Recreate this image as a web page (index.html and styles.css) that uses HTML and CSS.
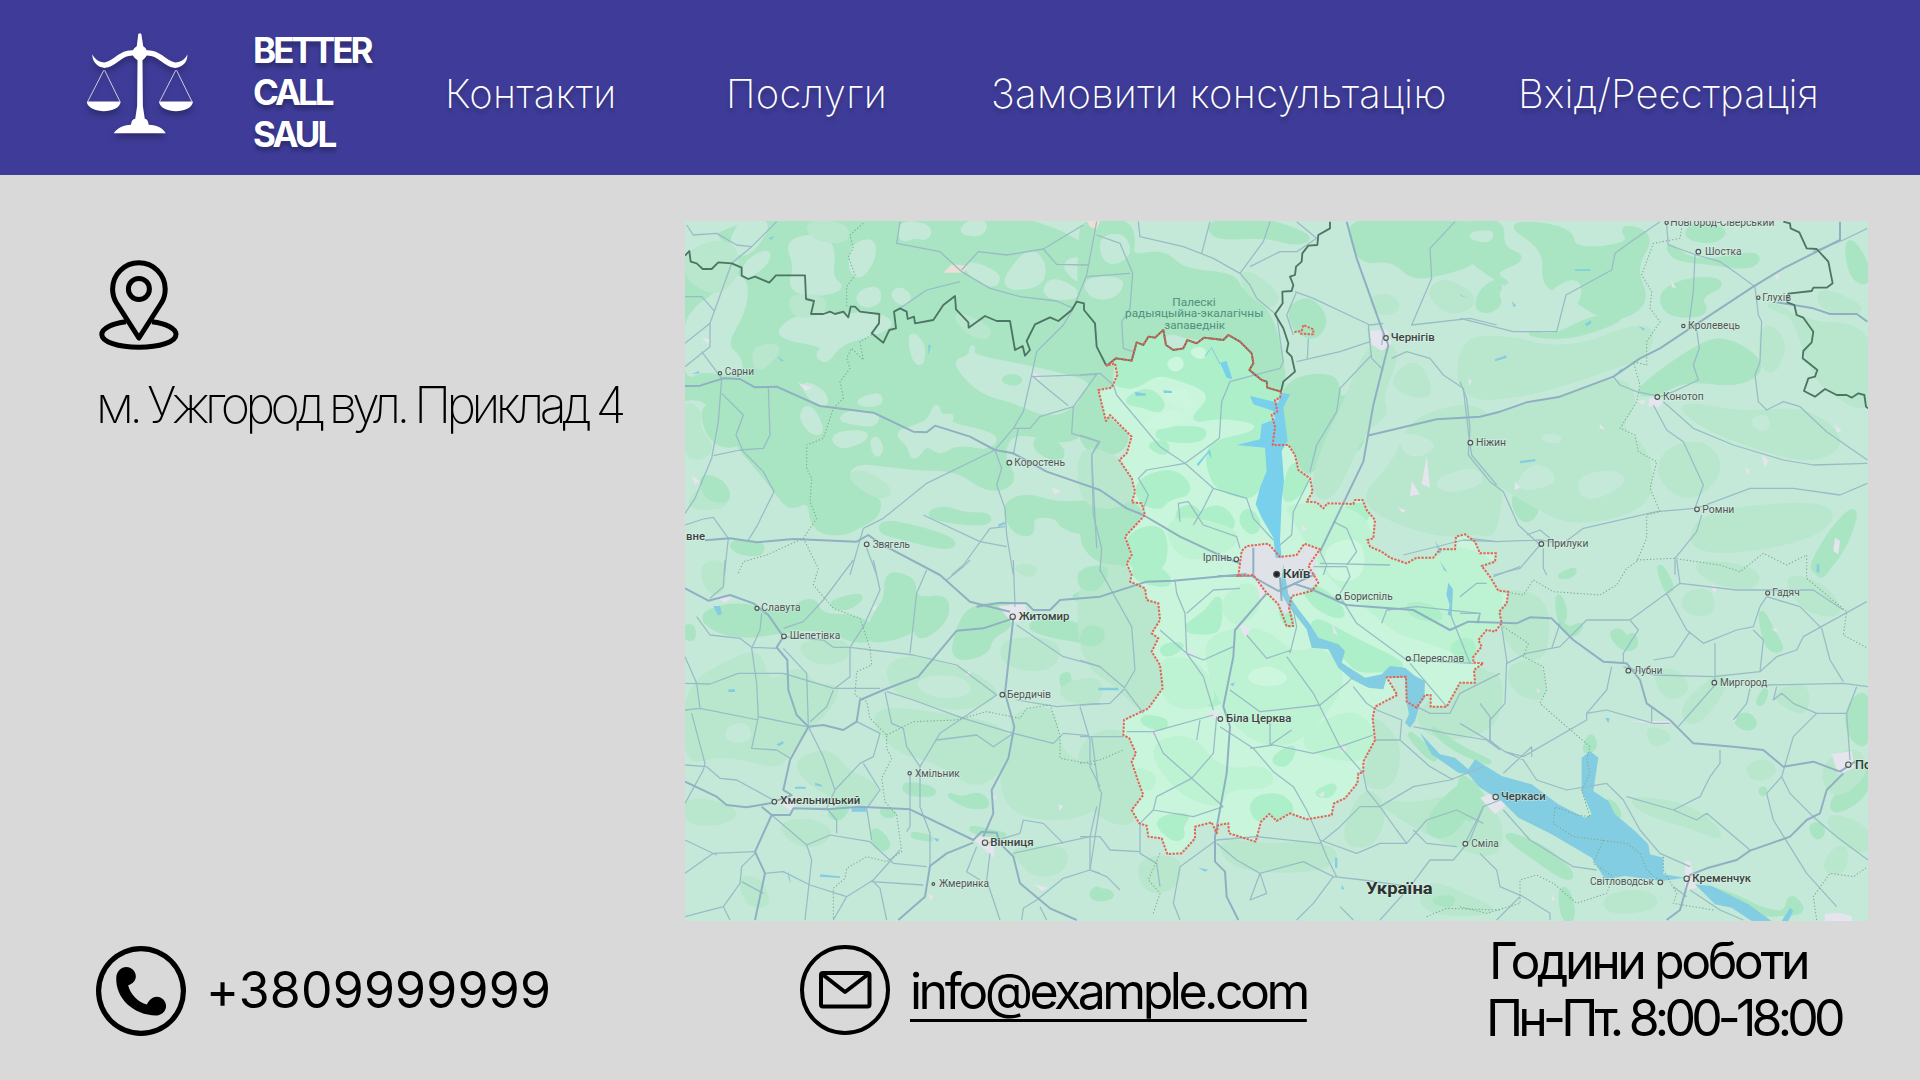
FILE: index.html
```html
<!DOCTYPE html>
<html lang="uk">
<head>
<meta charset="utf-8">
<title>Better Call Saul — Контакти</title>
<link rel="stylesheet" href="styles.css">
</head>
<body>
<header class="header">
  <svg class="logo" viewBox="72 100 277 304" preserveAspectRatio="none" aria-hidden="true">
    <path fill="#fff" d="M206 103Q210 99 214 103L219 140Q226 145 228 152C262 150 275 180 302 189C318 188 330 178 334 164C336 182 325 203 302 205C275 204 260 168 228 168Q224 177 217 182L218 320L223 358Q232 360 233 376C255 376 272 388 278 402H142C150 387 166 377 187 376Q188 360 198 358L203 320L204 182Q196 177 192 168C160 168 147 204 118 205C96 203 85 182 86 164C92 178 102 188 118 189C146 180 158 150 192 152Q195 145 202 140Z"/>
    <path fill="#fff" d="M71 306H160C157 345 75 345 71 306ZM260 306H349C345 345 264 345 260 306Z"/>
    <path fill="none" stroke="#fff" stroke-opacity=".8" stroke-width="2.6" d="M116 212L74 306M118 212L158 306M304 212L262 306M306 212L346 306"/>
  </svg>
  <div class="brand">BETTER<br>CALL<br>SAUL</div>
  <a class="nav-link">Контакти</a>
  <a class="nav-link">Послуги</a>
  <a class="nav-link">Замовити консультацію</a>
  <a class="nav-link login">Вхід/Реєстрація</a>
</header>
<main class="main">
  <section class="address">
    <svg class="pin" width="80" height="90" viewBox="0 0 80 90" fill="none" stroke="#000" stroke-width="5" stroke-linejoin="round" aria-hidden="true">
      <path d="M39.9 78L17.5 43C15 39 13.6 34 13.6 29A26.3 26.3 0 0 1 66.2 29C66.2 34 65 39 62.3 43Z"/>
      <circle cx="39.9" cy="29" r="10.5"/>
      <path d="M53 61.8C67 63.5 77 68.5 77 74.5C77 82 60.5 87.3 39.9 87.3S2.8 82 2.8 74.5C2.8 68.5 13 63.5 27 61.8"/>
    </svg>
    <p class="address-text">м. Ужгород вул. Приклад 4</p>
  </section>
  <svg class="map" viewBox="0 0 3549 2100" preserveAspectRatio="none">
    <defs>
      <clipPath id="oblast-clip"><use href="#oblast"/></clipPath>
      <path id="oblast" transform="translate(1185 -18)" d="M80 452L108 430 155 437 170 382 190 390 205 365 225 368 250 345 258 390 280 405 310 400 322 375 350 385 372 368 430 375 445 360 480 380 515 415 520 445 508 465 545 495 560 500 562 518 603 530 600 548 585 555 592 590 575 600 585 635 578 690 625 690 645 720 655 765 690 790 698 830 680 860 710 862 730 880 742 865 820 867 825 855 848 855 860 885 885 915 880 970 862 975 870 995 905 1010 930 1028 980 1045 1010 1028 1060 1028 1080 1003 1125 1003 1128 965 1155 958 1185 980 1200 1015 1248 1015 1245 1040 1205 1053 1230 1085 1255 1127 1285 1130 1280 1165 1258 1190 1265 1225 1245 1250 1220 1245 1195 1275 1205 1295 1180 1325 1180 1343 1210 1345 1182 1365 1185 1403 1140 1403 1100 1475 1052 1475 1052 1440 1035 1440 1010 1478 980 1460 978 1385 920 1387 952 1440 885 1475 878 1510 885 1575 850 1640 850 1672 835 1675 832 1705 795 1750 762 1765 755 1800 680 1813 630 1795 590 1818 568 1797 543 1820 527 1880 447 1855 445 1825 415 1830 410 1855 395 1822 345 1835 345 1870 305 1915 262 1917 245 1870 205 1865 200 1832 178 1825 155 1785 190 1740 175 1700 155 1640 168 1615 148 1570 130 1560 132 1515 205 1480 248 1420 240 1350 215 1310 235 1270 215 1255 240 1215 235 1165 200 1155 195 1120 150 1100 155 1080 140 1045 155 1020 135 965 195 900 185 865 155 862 165 830 155 790 118 735 140 715 155 665 90 600 78 618 55 525 95 518 112 480 105 445Z"/>
    </defs>
    <g class="map-art">
    <rect width="3549" height="2100" fill="#c5e9d8"/>

    <!-- north-west: dense forest with clearings -->
    <g transform="translate(-15 -18)">
      <path class="forest" d="M-30 -20H1300V560L1230 600 1180 690 1000 640 960 720 1010 800 930 830 830 760 720 760 640 750 520 735 490 800 600 850 590 900 560 920 480 960 400 940 390 850 330 880 290 830 220 740 180 700 130 600 60 540 -30 560Z"/>
      <path class="light" d="M25 18H120L100 60 130 90 70 110 15 100V40ZM180 18H270L230 90 190 120 150 100ZM200 140L270 105 255 150 190 190ZM320 80L420 60 460 100 450 190 490 220 400 240 330 220 350 150ZM520 90L580 75 580 130 540 190 510 160ZM660 60L665 30 700 25 750 40 740 70 700 60 675 75ZM840 50L870 20 920 25 900 60ZM860 140L960 180 940 215 870 180ZM975 190L1050 100 1095 150 1080 210 990 220ZM1090 230L1120 190 1210 240 1130 250ZM1150 140L1230 130 1250 210 1180 190ZM530 240L590 215 600 260 550 275ZM635 240L660 220 690 245 670 270ZM100 250L150 180 200 200 190 290 130 390 180 430 180 480 60 460 20 490 15 330 60 270ZM310 330L400 290 500 310 560 290 640 320 600 350 480 380 440 440 410 420 440 390 300 365ZM690 350L730 390 725 450 700 430ZM820 440L870 430 880 390 870 425 1000 450 1140 480 1240 510 1170 580 1100 600 1000 555 900 530ZM365 500L430 530 440 570 400 560ZM520 565L600 535 600 570ZM360 600L390 570 430 650 395 655ZM480 610L520 590 595 600 580 630 510 620ZM455 660L550 650 560 670 480 700ZM575 680L590 670 605 700 590 725ZM750 620L770 565 780 610 820 600 800 630 950 660 930 700 830 680 780 715 740 680 700 735 690 690 650 655 700 640Z"/>
      <path class="mid" d="M20 110L150 70 180 170 110 240 20 190ZM330 240L440 250 420 300 340 300ZM820 290L930 340 920 370 860 350ZM220 400L290 390 290 420 230 470ZM15 560L60 590 50 640 100 700 60 730 15 720ZM500 780L560 770 640 830 590 850ZM20 860L110 790 150 870 60 880ZM380 20L500 30 500 80 400 70Z"/>
      <path class="forest" d="M60 580L130 560 190 600 190 690 100 690ZM60 780L130 800 150 860 80 850ZM750 890L800 880 850 900 930 900 920 930 760 910ZM610 920L720 940 830 980 800 1000 680 970 600 950ZM970 870L1040 840 1130 870 1260 860V960L1150 940 1130 900 1050 900 1060 960 1000 950ZM150 980L250 985 240 1020 170 1010ZM1080 660L1150 700 1140 740 1060 700ZM965 493L1000 482 1025 495 1000 508Z"/>
    </g>
    <!-- north: Polesia reserve and the Chernihiv side -->
    <g transform="translate(1185 -18)">
      <path class="forest" d="M20 18H140L160 70 150 130 250 110 310 170 460 180 480 230 560 280 600 400 615 540 545 495 508 440 440 360 330 370 260 340 150 430 80 450 0 380V60ZM390 18H530L600 30 700 70 640 85 560 60 400 70ZM810 10H1180L1150 100 1190 140 1100 170 1000 190 940 130 850 140 820 90ZM640 270L690 250 740 310 710 370 650 350 630 300ZM650 490L760 480 780 540 770 600 720 700 690 790 640 710 610 640 605 540ZM790 640L840 620 850 680 810 720ZM1200 230L1260 190V280L1190 290ZM760 540L880 560 860 600 780 620ZM0 530L60 520 80 620 150 660 110 720 0 700ZM20 860L150 860 190 900 130 960 150 1070 0 1010Z"/>
      <path class="mid" d="M870 380L960 400 900 540 920 600 850 640 760 850 700 840 720 720 800 560ZM1000 600L1260 560V960L1180 950 1070 960 900 900 850 840 950 740ZM870 250L930 240 960 280 900 300ZM490 160L600 240 570 280 490 220ZM1040 230L1100 190 1200 260 1110 300ZM930 500L1010 430 1060 540 990 540ZM0 700L100 720 150 790 150 860 60 880 0 840Z"/>
      <path class="light" d="M10 195L130 190 110 240 40 250ZM60 70L130 60 150 120 80 150ZM1100 360L1150 350 1170 390 1110 400ZM950 650L1080 690 990 730ZM1060 800L1180 760 1210 800 1110 830Z"/>
    </g>
    <!-- north-east -->
    <g transform="translate(2325 -18)">
      <path class="forest" d="M0 18H130L120 100 200 130 90 170 160 220 50 150 0 100ZM130 20L330 40 340 110 520 90 480 30 580 60 520 160 560 250 510 300 430 310 330 240 250 210 260 100ZM620 80L700 150 900 110 880 160 740 140 640 130ZM600 230L700 190 800 200 720 250 740 300 620 300ZM550 510L720 390 800 370 920 450 840 510 680 490 600 530 540 540ZM690 30L800 40 770 80 680 70ZM0 470L90 480 160 520 60 500ZM190 350L280 370 390 310 500 300 420 340 300 370ZM170 830L230 820 230 900 190 920 160 870ZM1060 1040L1120 940 1190 870 1170 960 1110 1060 1060 1070ZM130 690L170 760 160 790 130 740ZM1160 60L1220 140 1222 210 1170 180Z"/>
      <path class="mid" d="M0 370L160 370 250 400 390 390 500 340 580 340 560 420 440 460 240 530 0 560ZM0 620L280 560 480 480 530 560 470 640 560 700 580 870 350 930 220 870 110 800 30 720ZM640 560L860 600 1040 580 1160 680 1060 740 900 700 740 640ZM900 260L1000 290 1040 420 1090 520 1240 600V400L1180 330 1060 330ZM620 700L740 680 790 770 690 860 590 790ZM730 890L1120 860 1100 950 860 1010 680 1000ZM910 320L980 380 940 480 900 440ZM1080 220L1220 280 1150 300 1080 270Z"/>
      <path class="light" d="M120 230L180 190 200 250 140 270ZM720 260L800 220 880 250 800 280ZM170 810L220 750 270 770 280 800 210 820ZM350 790L460 770 500 800 380 860ZM240 670L290 660 300 680ZM870 620L920 600 920 650ZM260 240L350 190 360 250 300 310ZM20 60L100 50 80 80ZM1130 20L1220 20V70Z"/>
    </g>
    <!-- south-west -->
    <g transform="translate(-15 1017)">
      <path class="forest" d="M60 160L180 130 300 170 400 110 420 170 530 170 600 220 540 250 430 200 310 210 200 230 100 210ZM620 60L640 40 700 60 700 100 720 120 800 110 800 180 720 240 700 190 690 220 560 250 580 170 620 120ZM440 130L560 100 500 150ZM870 140L1000 130 990 200 930 230 920 280 820 300 830 220ZM1040 190L1160 180 1260 230V250L1080 220ZM1160 110L1260 90V130ZM1140 350L1170 340 1160 400ZM800 370L870 380 850 410ZM670 670L760 685 760 705 680 700ZM800 700L840 720 900 700 930 740 860 740ZM580 800L630 850 610 870 580 850ZM440 760L510 730 480 780ZM600 750L650 760 620 770ZM15 200L40 200 40 240 15 230ZM700 820L770 840 700 830ZM860 800L1000 830 900 820ZM1230 1000L1260 980V1020Z"/>
      <path class="mid" d="M15 380L180 290 240 280 260 380 360 320 400 380 480 380 440 450 390 500 350 540 300 620 220 600 120 580 15 610ZM110 500L260 480 320 530 250 580 150 560ZM620 310L720 290 800 320 900 350 960 410 840 450 720 420 640 390ZM560 440L820 470 960 500 1000 560 950 640 880 680 770 600 640 570ZM1000 460L1120 440 1130 540 1160 600 1250 620 1260 740 1150 780 1000 760 960 660 1000 560ZM1140 380L1260 350V430L1160 420ZM350 600L450 570 500 640 600 680 560 740 440 700 370 650ZM300 790L400 780 460 820 400 860 330 840ZM1000 870L1160 860 1150 930 1070 950 1010 890ZM180 950L240 960 270 1040 200 1030ZM20 710L180 750 130 790 20 790ZM350 250L500 240 500 300 400 310ZM1000 20L1070 20 1050 50ZM60 20L130 0 130 90 90 100ZM960 240L1140 240 1120 330 980 320Z"/>
      <path class="light" d="M150 500L200 495 210 540 140 540ZM700 360L840 350 880 400 760 410Z"/>
    </g>
    <!-- south, under the Kyiv region -->
    <g transform="translate(1185 1017)">
      <path class="mid" d="M0 20L150 20 235 120 220 240 250 370 190 460 120 380 0 300ZM860 460L960 540 940 680 850 680 880 560ZM1020 440L1260 300V500L1100 540 1020 500ZM0 540L140 500 180 680 160 800 60 770 0 700ZM420 840L560 860 700 850 780 880 720 930 520 930 440 900ZM850 680L920 740 880 860 780 850ZM170 900L300 890 290 980 200 1000ZM1040 960L1180 1020 1260 1060H1020ZM880 720L1000 740 1150 700 1260 760V900L1080 840Z"/>
      <path class="forest" d="M0 30L90 20 50 90 0 80ZM20 200L70 210 60 250 0 250ZM1060 750L1160 660 1200 680 1150 780 1100 830 1040 820ZM1040 490L1130 560 1260 620 1120 570ZM30 1000L80 990 100 1010 50 1020ZM1050 1020L1120 1010 1110 1040ZM970 500L1080 600 1040 590Z"/>
    </g>
    <!-- south-east -->
    <g transform="translate(2325 1017)">
      <path class="forest" d="M590 0L640 80 620 100ZM290 90L320 160 300 190 330 210 370 190 340 230 300 200ZM450 220L480 210 500 240 520 220 530 260 490 270ZM900 140L940 220 970 270 930 270 910 220ZM1170 430L1224 390V560L1180 540 1160 490ZM820 480L860 460 890 490 860 510ZM1190 640L1224 600V700L1130 760 1110 730ZM140 820L250 860 340 940 320 960 220 890 150 840ZM0 640L40 680 80 720 30 790 0 740ZM1050 800L1080 790 1090 820 1070 835ZM440 720L470 740 480 780 440 750ZM300 980L330 1000 340 1080 310 1080ZM370 580L390 520 410 560ZM290 50L350 25 330 50ZM1060 0L1120 0 1080 60ZM890 430L920 380 910 430ZM700 970L830 1010 920 1060H1040L990 1000 980 1070 840 1050ZM900 690L915 685 910 705Z"/>
      <path class="mid" d="M110 90L260 110 260 280 200 300 130 230ZM660 450L740 370 800 340 780 410 700 500ZM680 100L750 90 760 160 690 160 670 130ZM500 710L700 740 800 840 700 800 560 760ZM1080 620L1190 560 1224 640 1120 720ZM940 400L1040 370 1040 460 980 440ZM1120 870L1160 860 1150 940 1090 930ZM580 340L650 330 690 390 620 420ZM970 40L1100 80 1150 170 1030 150ZM140 320L240 300 260 420 170 400ZM700 0L900 30 880 90 740 60ZM0 330L100 330 100 500 0 470ZM860 620L920 600 950 640 880 660ZM560 500L640 530 580 560ZM430 1010L560 990 600 1040 450 1060ZM1090 760L1224 800V880L1150 850Z"/>
    </g>

    <!-- Kyiv region -->
    <use href="#oblast" fill="#c8f5dc"/>
    <g clip-path="url(#oblast-clip)">
      <g transform="translate(1185 -18)">
        <path class="inner-forest" d="M90 445L250 320 450 340 540 430 620 530 560 640 590 680 560 760 520 850 440 830 400 800 380 720 410 680 520 660 540 620 420 600 330 620 390 560 380 520 300 490 230 470 160 520 90 500ZM130 560L200 520 250 560 240 590 190 570ZM240 640L380 640 360 680 230 670ZM200 690L260 680 260 720ZM640 730L690 800 630 860 610 840ZM170 800L280 760 340 830 260 850 240 880 180 860ZM350 900L420 870 470 930 410 960ZM140 960L240 930 260 1000 240 1070 150 1060ZM760 900L850 860 870 910 800 930ZM290 890L340 870 370 920 300 940ZM820 960L850 990 840 1040 800 1000ZM500 880L540 920 520 960 480 920Z"/>
        <path class="inner-mid" d="M620 870L840 880 880 1000 1260 1000 1260 1240 1180 1330 1060 1280 950 1250 850 1160 740 1080 640 900ZM250 900L470 940 460 1000 300 1040Z"/>
        <path class="inner-light" d="M265 440L300 430 305 455 280 465ZM330 410L370 400 370 430ZM250 540L300 520 340 560 320 580ZM180 640L240 600 300 590 290 630ZM730 1000L840 970 850 1080 760 1100Z"/>
      </g>
      <g transform="translate(1185 1017)">
        <path class="inner-forest" d="M300 210L380 160 420 100 420 190 400 220ZM160 20L240 20 280 80 170 60ZM700 170L820 240 990 320 900 330 830 330 800 290 700 230ZM240 260L320 250 260 290ZM660 60L760 110 800 180 700 140ZM980 130L1060 140 1090 180 1000 170ZM340 370L420 360 440 420 370 440ZM570 600L650 550 620 620ZM700 700L770 670 750 710ZM240 560L300 560 320 630 250 620ZM220 780L330 760 300 800 310 830 280 840ZM930 360L980 350 980 440ZM510 720L600 700 650 760 530 790ZM600 150L620 140 640 190 620 200ZM190 470L260 480 250 510 190 490ZM1100 260L1180 230 1180 320ZM400 240L440 220 450 260Z"/>
        <path class="inner-mid" d="M380 230L540 200 640 290 720 260 800 350 720 480 620 560 500 530 420 420 390 330ZM250 300L340 300 400 380 390 440 270 440 240 350ZM650 540L800 450 880 500 860 600 740 590ZM200 560L330 520 420 640 560 620 580 680 440 680 420 740 300 700ZM160 620L230 650 200 700ZM520 60L420 120 460 200 540 150Z"/>
        <path class="inner-light" d="M500 350L560 320 620 350 600 370 540 370Z"/>
      </g>
    </g>

    <!-- built-up areas -->
    <g fill="#e6e4ec">
      <path fill="#dfe3e8" d="M1660 1020L1685 975 1750 968 1785 1005 1840 1000 1860 968 1905 985 1890 1040 1900 1085 1860 1110 1815 1125 1820 1165 1800 1180 1765 1130 1705 1065 1660 1065Z"/>
      <path d="M2055 330L2105 325 2120 370 2090 390 2060 370ZM940 1155L1020 1150 1030 1195 980 1205ZM855 1845L930 1850 925 1910ZM2385 1730L2440 1710 2465 1750 2430 1780ZM3440 1600L3500 1590 3510 1640 3460 1660ZM3000 1920L3015 1920 3035 2000 3000 2010ZM265 1735L340 1730 320 1770ZM2225 705L2235 800 2210 790ZM2180 780L2205 820 2175 825ZM2895 530L2935 540 2920 560 2890 555ZM1710 1075L1745 1110 1730 1145ZM1660 1210L1700 1220 1680 1250ZM1960 1570L1985 1580 1975 1600ZM1940 1205L1960 1245 1945 1235ZM1560 1480L1600 1470 1610 1500ZM1395 1525L1420 1530 1410 1550ZM1500 1290L1530 1290 1520 1310ZM3420 2080L3460 2075 3500 2085V2100H3420ZM3230 700L3250 720 3240 740ZM3450 950L3465 960 3460 1000 3445 990ZM90 1125L140 1130 120 1145ZM1050 1990L1090 2000 1070 2010ZM340 485L380 500 360 510ZM1035 450L1070 465 1060 480ZM3080 1090L3100 1100 3085 1115ZM2830 1500L2965 1500 2950 1512ZM20 765L45 780 30 790ZM1100 800L1130 810 1110 820ZM50 350L75 355 70 370Z"/>
      <path fill="#ecdfd8" d="M775 155L800 130 850 135 835 155ZM1205 0H1245L1235 25 1215 18Z"/>
      <path d="M2490 780l14 20-14 8zM2860 540l22-4-10 16zM2745 610l16 16-18-4zM2960 180l14 22-14-4zM3270 160l14 4-8 14zM3450 610l20 20-14 4zM3180 740l14 6-4 16zM2350 470l10 10-6 14zM2140 860l24 8-12 8zM1850 910l16 14-14 8zM1900 1720l20-10-6 20zM560 1160l16-8-8 20zM2555 1400l10 10-8 6zM3140 1490l16 2-8 12zM3260 1220l22 8-12 4zM3512 1190l14 16zM3130 2040l10-14 2 14zM2600 2020l10 16-8 4zM840 1360l18-12-4 16zM1120 1750l14 4-10 16zM920 1720l16 10-12 6zM730 2020l16 4-10 16z"/>
    </g>

    <!-- water -->
    <g fill="#83cde2">
      <path fill="#78d0ec" d="M1695 525L1780 545 1788 515 1815 520 1795 560 1808 660 1790 690 1797 780 1790 840 1785 960 1790 1010 1772 1010 1765 950 1730 890 1712 850 1725 800 1745 750 1740 680 1655 672 1725 655 1730 610 1770 595 1765 570 1705 550ZM1605 425L1625 420 1642 475 1625 470ZM1535 730L1575 685 1580 715 1570 695 1540 735Z"/>
      <path d="M1795 1030L1810 1120 1840 1165 1875 1210 1900 1250 1960 1270 1980 1290 1970 1325 2040 1370 2090 1360 2115 1335 2160 1340 2190 1365 2220 1380 2218 1435 2195 1460 2165 1445 2160 1370 2105 1370 2095 1405 2050 1400 2000 1375 1960 1340 1930 1285 1880 1280 1865 1225 1810 1155 1785 1110Z"/>
      <path d="M2165 1445L2205 1450 2190 1500 2175 1520 2160 1505 2172 1480ZM2205 1535L2265 1600 2310 1610 2350 1645 2370 1615 2450 1665 2540 1690 2620 1750 2700 1790 2720 1780 2690 1710 2690 1610 2715 1590 2740 1610 2725 1710 2770 1740 2790 1780 2850 1830 2890 1870 2895 1900 2935 1910 2935 1960 3000 1970 2930 1980 2820 1965 2760 1975 2720 1910 2600 1840 2500 1790 2450 1740 2385 1700 2350 1660 2320 1655 2240 1600ZM3030 1990L3080 1995 3190 2050 3260 2100H3200L3140 2060 3090 2050ZM3315 2060L3325 2070 3310 2100 3290 2100Z"/>
      <path d="M85 1155l20 0 6 24-12 4zM1240 1400h60v8h-60zM2670 145h46v5h-46zM2505 720l46-6v7l-46 6zM2430 415l34-12v8l-34 10zM2700 308l18-10v10l-14 8zM250 52l18-8-8 12zM2480 240l14 14-8 4zM275 405l22 14-8 2zM20 460l20-10 4 6zM1350 512l32 6v6h-30zM1435 508l26 2v6h-24zM2290 1085l14 20-4 80-12-4 6-30-10-30zM1635 1390l14-6-4 12zM500 1758h44v14h-44zM330 1697h32v6h-32zM390 1685l20 6v6l-20-4zM130 1405h20v8h-20zM275 1570l20-10v8l-14 8zM405 1960l60 6v5l-60-4zM310 1950l8 40-8-20zM745 1850l18 4-6 10zM1540 1940l30 6-10 6zM1950 1910h7v30h-7zM1970 1990l8 14-8 2zM2760 1490l14 2-4 14zM2540 1810l20-16zM730 370l8 4-8 28zM940 910l20-8v8l-20 8zM3395 1030h8v24h-8zM2800 450l14-10-8 14zM2860 315l20 8-4 6zM2320 220l30 10-20-4zM2250 960l20 30-6 10zM2265 1020l22 34-10-6z"/>
      <path d="M1560 405L1580 380 1605 430" fill="none" stroke="#83cde2" stroke-width="3"/>
    </g>

    <!-- secondary roads -->
    <g class="road">
      <path transform="translate(-15 -18)" d="M20 30L40 60 110 55 170 90 215 95 290 20M215 95L155 145 90 325 90 395 15 455M15 245L65 245 105 290M15 385L90 325M65 410L125 490 115 620 95 730 45 850 15 895M125 535L190 600 168 660 190 710 250 770 282 830 230 935 205 975M265 520L270 660 250 700 180 705 100 722M15 930L70 912 100 907 145 970 133 1080M660 20L650 85 780 110 845 170 930 220 1020 245 1130 258 1180 280 1220 180 1250 20M845 165L895 110 980 120 1090 102 1210 30M1090 102L1130 148 1225 150M840 200L740 225 660 280M1180 280L1150 330 1070 410 1055 480 1030 590 1000 640 945 705 740 805 610 910 550 940 510 1080M1055 485L1250 478 1180 575 1080 605 1050 640H1000M1060 485L1100 520 1165 572M1180 575L1175 655 1255 680 1235 720 1250 1000M1015 640L1000 720M945 705L965 760 950 810 975 880 980 960 1000 1080M730 900L900 980 980 995M975 935L930 940 850 1050 815 1080M560 1000L590 1080"/>
      <path transform="translate(1185 -18)" d="M50 60L120 85 158 175 150 280 125 320 130 400 160 410M20 185L150 175M175 20L180 65 310 95 400 130 480 175 510 210 530 250 590 300 610 440 600 460 450 500 425 560 418 670 315 745 200 765 175 790 205 840 190 880M390 20L365 115M570 20L550 80 480 175M510 155L600 110 650 110 710 70 650 20M0 480L60 475 100 510 110 540 240 695 315 745 400 820 500 850 520 910 580 975M400 820L370 880 340 930M300 920L295 865 325 860 370 930 470 965 480 1000M645 230L700 250 870 330M865 330L870 380 780 410 650 440M650 230L620 300 640 360M685 370L682 430M870 330L910 325M865 340L875 430 910 465M875 420L780 520 770 590 710 690 690 770M935 430L980 410 1050 430 1090 480 1150 520 1165 650 1175 720 1250 810M1125 20L1050 100 1055 190 995 330 1170 310 1250 330M910 355L905 390M690 790L640 890 635 960 600 990M760 920L800 940 830 1010 800 1050M0 660L60 680 35 720 40 900 65 1000 60 1070M720 1045L930 1050M720 1010L740 1050 730 1080M970 1020L1150 975 1250 980"/>
      <path transform="translate(2325 -18)" d="M0 310L160 350 290 350 318 240 455 165 465 115 520 75 600 20M620 30L625 90 710 120 780 140 830 175 885 215 895 300 905 320 900 440 885 480 895 560 920 585 970 560 1020 575 1100 650 1222 735M705 120L700 230 685 340M710 345L718 400 700 450 715 495 640 530 600 545 530 530 480 510 460 485M580 570L620 645 670 680 730 810 705 880 590 890 370 940 310 985 240 975 110 980 30 970M610 560L700 640 820 690 970 735 1060 750 1222 745M710 880L870 820 1000 820 1140 840 1222 805M725 900L710 950 645 1030 645 1080M0 500L20 550 30 640 25 720 90 800 130 830 175 930 240 990 180 1060 100 1080M250 1000L250 1060 260 1080M1222 40L1150 75 1060 110M200 960L240 945 270 970"/>
      <path transform="translate(-15 1017)" d="M50 170L90 225 180 235 215 262 290 265M310 230L430 240 460 262 510 262 700 285 830 315 950 405 780 520 720 620M245 160L240 210 215 265 230 370 235 470 215 565 290 570 330 595M520 0L430 120 370 185 310 205M580 0L600 90 550 200 510 262 510 350 465 385M135 0L130 80 90 115M740 30L710 100 690 280M310 265L380 340 385 500 430 590 465 690 440 745 380 745M15 370L90 372 175 340 310 340 460 385 600 385M460 390L440 440 390 485M235 470L380 500M15 450L60 445 235 480M60 445L50 370 15 290M35 460L75 610 70 630 15 730M15 615L80 620 120 655 170 660 280 720M530 485L600 520 580 590 540 610 465 690M550 610L600 690 560 745 575 840M620 395L700 420 850 475 1000 520 1120 550 1150 520 1260 530M615 395L635 490 670 505 680 560 720 620 720 740 750 820 750 920M690 640L690 800 680 815M770 540L890 525 940 560 1000 520M1010 420L1130 440 1260 430M1200 440L1230 540 1230 620 1260 680M1010 195L1150 290 1260 320M275 765L380 855 450 825 570 845 640 910 740 920M440 745L470 780 470 820M380 855L395 900 375 1080M225 875L100 880 15 940M15 840L110 885M255 940L310 935 390 975 500 1010 580 960 660 870M225 880L185 920 180 970 130 1040 15 1070M185 965L250 1000M130 1040L150 1080M500 1010L460 1080M575 960L600 985 620 1080M575 965L730 975M890 860L860 935 900 960M930 880L920 960 960 1080M920 850L1020 820 1030 780 1090 790 1150 850M1000 880L1230 830 1250 740M1230 830L1230 930 1150 955 1070 1020 1030 1045 1025 1080M1230 930L1260 940M1080 1040L1100 1080M800 60L850 20 870 0M1000 0L1005 140"/>
      <path transform="translate(1185 1017)" d="M320 160L400 90 480 85M285 60L290 100 315 160 320 280M240 210L320 280 370 300 460 260M320 280L370 350 400 450M140 515L220 515 400 465M350 540L360 480M220 515L250 580 335 655 430 740M410 470L400 580 335 655 230 710 220 750 340 770 430 740M420 500L520 565 580 635 640 680 680 750 720 840M450 390L540 455 720 435 800 370 820 350M620 290L700 400 780 560 850 640M630 280L650 200 640 150M635 270L560 295 500 225M510 565L580 555 700 580 780 560 880 525M570 490V555L635 510M820 380L860 430 890 450 965 480 960 540 885 540M960 540L1050 620 1120 660M850 640L860 690 900 740 1000 680 1110 660 1210 620M780 110L830 190 980 300 1180 310M990 310L1100 440M905 190L920 150 1010 140 1200 160 1190 190M1110 160L1170 310M0 300L60 320 130 380 190 460M0 435L90 430 130 390 165 330 155 200 60 30M0 530L130 530M35 530L55 680 65 700 30 930M0 830L60 830 90 870 180 875M30 930L80 950 120 990M410 840L530 830 720 850 780 800 840 740 900 740 950 810 980 850 900 850 830 880 720 840M220 750L180 790 180 880 230 910 240 980M410 840L300 920 280 1030 300 1080M410 850L470 900 540 940 670 905 760 950 850 960 990 980 1050 900 1120 900 1170 840 1210 740 1260 720M540 940L510 1020 560 1000 540 940M760 950L700 1030 650 1080M720 840L740 890 770 950M980 850L1040 780 1130 750 1210 790M1000 810L1040 850 1130 860M990 980L900 1080M780 1040L820 1080M1010 440L1050 460 1110 460 1140 400 1260 340M1200 430L1230 470 1230 540 1260 570M1000 500L1100 520 1220 540 1260 570M700 20L800 20 810 50 780 100"/>
      <path transform="translate(2325 1017)" d="M0 490L100 550 135 575 190 600 230 660 320 690 440 670 490 720 540 810 600 880 690 920M125 200L140 300 135 430 90 480 90 550M140 310L200 280 300 260 380 180 510 180 620 100 660 70 650 0M300 190L275 265M510 180L535 210 490 280 490 310M620 100L680 210 730 250 830 210 880 200 900 140 920 110M690 215L640 290 580 300M765 250V360M490 320L580 345 760 350 900 335 950 290 1010 270 1030 230 1220 125M920 110L1020 140 1085 205 1110 300 1150 365M660 70L830 90 1060 90 1150 150M920 375L1150 370 1224 380M765 375L655 500M455 320L440 390 380 460 380 480 190 590 135 575M380 460L440 450 580 490 630 490M575 440V490M130 640L215 560 215 590M950 380L940 420 965 400 1000 430 1070 460 1160 460 1190 380M1070 460L1000 530 965 650 990 700 1065 775 1130 830 1224 900M870 385L860 430 820 480M965 650L920 700 940 780 1040 940 1130 1040M780 570L780 610 750 650 720 710 640 750 500 710M640 750L710 780 740 760 870 870M1160 460L1170 600M130 750L210 840 340 920 410 930M70 740L40 800 20 840M60 880L110 930 120 980 190 1010 270 1060 270 1080M690 990L780 1050 850 1080M640 980L680 1010M180 1010L110 1080M880 210L910 240 900 335M100 50L180 20M0 110L50 70 80 70M0 160H60L55 190"/>
    </g>
    <!-- highways -->
    <g class="highway">
      <path transform="translate(-15 -18)" d="M15 513L60 512 130 490 180 492 225 517 290 515 420 573 580 593 700 650 740 652 765 632 870 665 945 705 1000 715 1100 770 1260 825 1340 880 1390 900 1500 965 1640 1030 1680 1045M75 976L150 970 230 982 340 972 530 980 565 960 600 985 780 1080 870 1160 990 1190"/>
      <path transform="translate(1185 -18)" d="M800 20L830 130 905 340 925 390 880 570 850 740 720 1010M862 662L1070 613 1200 605 1260 590 1340 562 1440 545 1600 485 1680 430 1740 400 1830 340 2020 215 2110 160 2280 75 2280 20"/>
      <path transform="translate(2325 -18)" d="M950 262L1060 280 1110 297 1190 297 1222 320"/>
      <path transform="translate(-15 1017)" d="M15 85L85 122 150 105 220 130 265 165 310 230 290 262 322 300 325 390 350 465 385 500 430 495 490 510 530 485 540 420 610 390 715 350 830 212 910 205 1000 175 975 400 1003 500 985 595 935 690 940 760 910 830M15 665L110 710 140 735 200 742 270 730 335 705 310 690 330 600 385 500M245 740L275 765H330L340 745 440 748 540 740 690 748 880 840 905 815 950 818 960 850 1000 890 1020 970 1110 1045 1190 1080M275 765L225 875 255 940 225 1080M880 848L800 880 750 918 735 1010 655 1080M890 140L960 128 1040 130 1060 150 1110 150 1140 120 1260 110 1400 65 1480 62 1700 42"/>
      <path transform="translate(1185 1017)" d="M560 100L465 210 460 290 430 440 450 500 440 640 405 830 405 905 435 935 440 1010 475 1080M640 70L700 90 800 135 1000 150 1110 210 1165 185 1310 190 1350 172 1415 175 1480 240 1570 305 1640 310 1680 360 1700 430 1770 480 1840 550 1960 560 2050 570 2110 620 2200 605 2280 635 2325 605"/>
      <path transform="translate(2325 1017)" d="M1150 640L1100 690 1080 760 1040 780 990 830 870 872 830 900 740 925 690 945 660 1050 620 1080"/>
      <path d="M1600 1065L1700 1065 1780 1110 1890 1060M1705 980V1065M1785 1070L1790 1140"/>
    </g>

    <!-- internal boundaries -->
    <g class="district">
      <path transform="translate(-15 -18)" d="M550 25L510 60 520 100 505 125 525 180 500 215 500 280M575 360L540 380 550 435 515 400 500 430 510 460 480 500 490 550 460 580 430 670 380 690 380 760 395 790 390 860 410 910 370 970 260 1020 190 1040 175 1075M370 970L415 1060 400 1110 460 1180 540 1210 570 1300 575 1350 530 1370 525 1440 560 1460 570 1510 620 1560 620 1600 635 1630 605 1690 615 1760 650 1800 665 1910 620 1940 560 1925 500 1960 495 1990 460 2020 460 2110M620 1560L700 1520 830 1515 920 1490 1020 1510 1040 1480 1110 1470 1140 1560 1140 1630 1250 1650"/>
      <path transform="translate(2325 -18)" d="M665 40L660 70 580 85 545 180 575 230 570 280 600 320 560 380 560 450 520 440 540 510 530 560 480 640 525 660 535 710 590 740 570 820 600 890 560 900 560 970 530 1040 500 1060 470 1110 420 1140 280 1130 220 1095 190 1140 130 1130M530 1035L640 1030 780 1050 840 1070 910 1015 980 1050 1040 1020 1040 1090 1160 1190 1150 1260 1224 1300"/>
      <path transform="translate(2325 1017)" d="M130 200L205 250 190 290 250 320 260 390 240 430 320 500 390 560 380 600 390 640 365 690 390 770 350 765 285 740 280 790 340 830 500 850 540 880 560 930 600 965M430 840L400 910 460 950 440 1000 350 1030 280 970 230 945 180 960 180 1030 80 1060 0 1040M610 890L610 930 650 1000 640 1030 760 1050M1070 1080L1060 1010 1110 940 1180 950 1224 920"/>
      <path transform="translate(1185 1017)" d="M240 880L205 960 240 1000 220 1060M0 610L60 600 130 570M1040 1070L1100 1045 1260 1050"/>
    </g>

    <!-- state border and region outline -->
    <g class="border">
      <path transform="translate(-15 -18)" d="M15 122L28 108 32 140 50 145 68 162 95 162 115 142 155 145 185 158 185 182 205 192 225 185 268 203 288 181 375 181 378 252 402 258 393 297 430 297 450 290 465 297 490 290 505 307 512 275 525 275 540 290 598 297 597 325 575 355 610 383 628 345 648 340 642 290 660 280 680 290 683 312 702 305 705 325 760 315 790 270 825 243 828 283 865 322 866 338 915 303 950 318 990 318 1005 405 1028 393 1035 422 1050 405 1040 378 1065 328 1110 307 1135 318 1175 285 1190 260 1212 265 1212 285 1245 325 1250 395 1278 450"/>
      <path transform="translate(1185 -18)" d="M750 20L750 40 715 60 712 90 685 92 667 115 665 140 648 155 645 180 630 185 640 210 635 228 607 230 608 265 585 298 610 340 625 385 620 410 635 425 645 470 610 500 603 530M80 452L108 430 155 437 170 382 190 390 205 365 225 368 250 345 258 390 280 405 310 400 322 375 350 385 372 368 430 375 445 360 480 380 515 415 520 445 508 465 545 495 560 500 562 518 603 530"/>
      <path transform="translate(2325 -18)" d="M970 20L990 25 992 40 1018 52 1040 100 1070 102 1105 140 1118 205 1100 218 1060 218 1055 228 985 236 982 262 1003 270 1010 300 1030 308 1060 350 1055 382 1030 408 1028 430 1072 465 1065 485 1045 490 1032 528 1065 545 1095 522 1130 540 1160 540 1175 548 1195 535 1213 540 1218 575 1224 580"/>
    </g>
    <use href="#oblast" class="outline"/>
    <path class="outline" d="M1660 1065L1670 990 1685 975 1750 968 1785 1008 1835 1002 1858 968 1905 985 1870 1035 1900 1085 1880 1110 1820 1125 1812 1160 1825 1215 1805 1215 1780 1150 1740 1110 1705 1062 1655 1065M1828 333L1850 330 1855 312 1885 325 1885 340 1845 338"/>

    <!-- place markers -->
    <g class="marker">
      <circle cx="105" cy="457" r="5"/><circle cx="973" cy="725" r="7"/><circle cx="545" cy="970" r="7"/><circle cx="2103" cy="351" r="7"/><circle cx="1654" cy="1015" r="7"/><circle cx="2945" cy="5" r="5"/><circle cx="3040" cy="92" r="7"/><circle cx="3220" cy="230" r="5"/><circle cx="2995" cy="315" r="5"/><circle cx="2917" cy="528" r="7"/><circle cx="2356" cy="665" r="7"/><circle cx="3036" cy="865" r="7"/><circle cx="2569" cy="969" r="7"/><circle cx="216" cy="1162" r="6"/><circle cx="297" cy="1246" r="7"/><circle cx="983" cy="1187" r="8"/><circle cx="952" cy="1421" r="7"/><circle cx="674" cy="1657" r="5"/><circle cx="268" cy="1742" r="7"/><circle cx="900" cy="1865" r="8"/><circle cx="745" cy="1989" r="4"/><circle cx="1960" cy="1128" r="7"/><circle cx="2170" cy="1313" r="6"/><circle cx="1606" cy="1494" r="7"/><circle cx="2341" cy="1868" r="7"/><circle cx="2432" cy="1728" r="8"/><circle cx="3248" cy="1116" r="6"/><circle cx="2830" cy="1349" r="7"/><circle cx="3088" cy="1385" r="7"/><circle cx="3490" cy="1631" r="8"/><circle cx="3005" cy="1973" r="8"/><circle cx="2926" cy="1984" r="7"/>
      <circle cx="1775" cy="1060" r="9" fill="#222"/>
    </g>
    </g>

    <!-- labels -->
    <g class="label" lengthAdjust="spacingAndGlyphs">
      <text x="119" y="463" textLength="88">Сарни</text>
      <text x="988" y="735" textLength="152">Коростень</text>
      <text x="563" y="980" textLength="112">Звягель</text>
      <text x="3" y="958" textLength="57" class="bold">вне</text>
      <text x="2117" y="360" textLength="132" class="bold">Чернігів</text>
      <text x="1553" y="1021" textLength="88">Ірпінь</text>
      <text x="2956" y="14" textLength="312">Новгород-Сіверський</text>
      <text x="3060" y="101" textLength="110">Шостка</text>
      <text x="3232" y="240" textLength="86">Глухів</text>
      <text x="3010" y="325" textLength="155">Кролевець</text>
      <text x="2934" y="538" textLength="122">Конотоп</text>
      <text x="2373" y="675" textLength="90">Ніжин</text>
      <text x="3052" y="876" textLength="96">Ромни</text>
      <text x="2586" y="977" textLength="124">Прилуки</text>
      <text x="229" y="1171" textLength="118">Славута</text>
      <text x="314" y="1255" textLength="152">Шепетівка</text>
      <text x="1001" y="1196" textLength="152" class="bold">Житомир</text>
      <text x="966" y="1430" textLength="132">Бердичів</text>
      <text x="690" y="1668" textLength="134">Хмільник</text>
      <text x="286" y="1750" textLength="240" class="bold">Хмельницький</text>
      <text x="916" y="1875" textLength="130" class="bold">Вінниця</text>
      <text x="762" y="1998" textLength="150">Жмеринка</text>
      <text x="1793" y="1072" textLength="84" class="city">Київ</text>
      <text x="1977" y="1137" textLength="146">Бориспіль</text>
      <text x="2184" y="1322" textLength="154">Переяслав</text>
      <text x="1623" y="1504" textLength="196" class="bold">Біла Церква</text>
      <text x="2359" y="1878" textLength="82">Сміла</text>
      <text x="2448" y="1736" textLength="134" class="bold">Черкаси</text>
      <text x="3262" y="1124" textLength="82">Гадяч</text>
      <text x="2848" y="1358" textLength="84">Лубни</text>
      <text x="3105" y="1394" textLength="142">Миргород</text>
      <text x="3510" y="1643" class="city">По</text>
      <text x="3022" y="1982" textLength="176" class="bold">Кременчук</text>
      <text x="2715" y="1993" textLength="192">Світловодськ</text>
      <text x="2043" y="2020" textLength="200" class="country">Україна</text>
      <g class="reserve">
        <text x="1462" y="254" textLength="130">Палескі</text>
        <text x="1320" y="288" textLength="415">радыяцыйна-экалагічны</text>
        <text x="1438" y="323" textLength="182">запаведнік</text>
      </g>
    </g>
  </svg>
</main>
<footer class="footer">
  <svg class="round-icon" viewBox="68 77 235 271" preserveAspectRatio="none" aria-hidden="true">
    <path fill-rule="evenodd" d="M68 212.500A117.500 135.500 0 0 1 303 212.500A117.500 135.500 0 0 1 68 212.500ZM81.500 212.500A104 120 0 0 0 289.500 212.500A104 120 0 0 0 81.500 212.500Z"/>
    <path d="M121 172C121 154 134 140 147 140C161 140 172 153 172 168C172 181 164 191 152 195C157 222 179 248 201 253C206 240 216 230 227 230C240 230 251 243 251 258C251 272 241 285 228 286C168 288 118 235 121 172Z"/>
  </svg>
  <span class="phone">+3809999999</span>
  <svg class="round-icon mail" viewBox="0 0 90 90" fill="none" stroke="#000" stroke-width="4" stroke-linejoin="round" aria-hidden="true">
    <circle cx="45" cy="45" r="43"/>
    <rect x="21" y="28" width="48.500" height="33.500" rx="2"/>
    <path d="M22 29L45 47L68.500 29"/>
  </svg>
  <a class="email">info@example.com</a>
  <div class="hours"><div class="hours-title">Години роботи</div><div class="hours-time">Пн-Пт. 8:00-18:00</div></div>
</footer>
<script src="map.js"></script>
</body>
</html>
```
FILE: map.js
```js
// Rounds the land-cover polygons: each vertex becomes the control point
// of a curve between the midpoints of its two edges.
function ringPoints(ring) {
  const points = [];
  let x = 0, y = 0;
  for (const [, cmd, args] of ring.matchAll(/([MLHV])([^MLHV]*)/g)) {
    const n = (args.match(/-?[\d.]+/g) || []).map(Number);
    if (cmd === 'H') { x = n[0]; points.push([x, y]); continue; }
    if (cmd === 'V') { y = n[0]; points.push([x, y]); continue; }
    for (let i = 0; i + 1 < n.length; i += 2) {
      x = n[i]; y = n[i + 1];
      points.push([x, y]);
    }
  }
  return points;
}

function smoothRing(points) {
  const mid = (a, b) => [(a[0] + b[0]) / 2, (a[1] + b[1]) / 2];
  let d = 'M' + mid(points[points.length - 1], points[0]);
  points.forEach((p, i) => {
    d += 'Q' + p + ' ' + mid(p, points[(i + 1) % points.length]);
  });
  return d + 'Z';
}

const cover = '.forest, .mid, .light, .inner-forest, .inner-mid, .inner-light';
document.querySelectorAll(cover).forEach(path => {
  const rings = path.getAttribute('d').split('Z').filter(Boolean);
  path.setAttribute('d', rings.map(r => smoothRing(ringPoints(r))).join(''));
});

// Labels keep their measured length by scaling the glyphs.
document.querySelectorAll('.label text[textLength]').forEach(t => {
  t.setAttribute('lengthAdjust', 'spacingAndGlyphs');
});
```
FILE: styles.css
```css
* { box-sizing: border-box; }
body {
  margin: 0;
  width: 1920px;
  height: 1080px;
  overflow: hidden;
  background: #d9d9d9;
  color: #000;
  font-family: Inter, "Liberation Sans", sans-serif;
}
.header {
  display: grid;
  grid-template-columns: 166px 192px 281px 265px 527px 1fr;
  height: 175px;
  padding-left: 87px;
  background: #3e3c98;
  color: #fff;
  align-items: start;
}
.logo {
  width: 106px;
  height: 101px;
  margin-top: 33px;
  filter: drop-shadow(0 4px 3px rgba(0, 0, 0, .3));
}
.brand {
  margin-top: 29px;
  font-size: 35px;
  font-weight: 700;
  line-height: 42px;
  letter-spacing: -3px;
  text-shadow: 0 4px 4px rgba(0, 0, 0, .3);
}
.nav-link {
  margin-top: 70px;
  font-size: 40px;
  font-weight: 200;
  line-height: 48px;
  letter-spacing: .34px;
  white-space: nowrap;
  text-shadow: 0 4px 4px rgba(0, 0, 0, .25);
}
.login { letter-spacing: .08px; }
.main {
  display: grid;
  grid-template-columns: 685px 1183px;
  padding-top: 46px;
}
.address { padding: 39px 0 0 96px; }
.pin { display: block; margin-left: 3px; }
.address-text {
  margin: 25px 0 0;
  font-size: 50px;
  font-weight: 200;
  line-height: 60px;
  letter-spacing: -4.5px;
  word-spacing: -1.2px;
  white-space: nowrap;
}
.map { display: block; width: 1183px; height: 700px; }
.footer {
  display: grid;
  grid-template-columns: 110px 594px 110px 576px 1fr;
  padding-left: 96px;
  align-items: start;
}
.round-icon { width: 90px; height: 90px; margin-top: 25px; }
.mail { margin-top: 24px; }
.phone {
  margin-top: 39px;
  font-size: 50px;
  line-height: 60px;
  letter-spacing: .2px;
}
.email {
  margin-top: 40px;
  font-size: 50px;
  line-height: 60px;
  letter-spacing: -3.5px;
  text-decoration: underline;
  text-decoration-thickness: 3px;
  text-underline-offset: 10px;
  justify-self: start;
}
.hours { margin-top: 12px; font-size: 50px; line-height: 57px; white-space: nowrap; }
.hours-title { padding-left: 3px; letter-spacing: -3.45px; }
.hours-time { letter-spacing: -4.8px; }

.map-art { filter: blur(1.2px); }
.forest, .mid, .light, .inner-forest, .inner-mid, .inner-light { stroke-width: 16; stroke-linejoin: round; }
.forest { fill: #a9e4c3; stroke: #a9e4c3; }
.mid { fill: #b8e7cd; stroke: #b8e7cd; }
.light { fill: #c5e9d8; stroke: #c5e9d8; }
.inner-forest { fill: #acefc8; stroke: #acefc8; }
.inner-mid { fill: #bdf2d2; stroke: #bdf2d2; }
.inner-light { fill: #cdf6df; stroke: #cdf6df; }
.road, .highway, .district, .border, .outline { fill: none; stroke-linejoin: round; }
.road { stroke: #98bcc6; stroke-width: 3.8; }
.highway { stroke: #8fb0c2; stroke-width: 6; }
.district { stroke: #7fab98; stroke-width: 3.2; stroke-dasharray: 4 6; }
.border { stroke: #4d7563; stroke-width: 5.5; }
use.outline, path.outline { stroke: #e06656; stroke-width: 6; stroke-dasharray: 7 4; }
.marker { fill: #d8e8e0; stroke: #4c5352; stroke-width: 3.4; }
.label {
  font-family: Roboto, "Liberation Sans", sans-serif;
  font-size: 30px;
  fill: #4f5655;
  stroke: #dff1e8;
  stroke-width: 4;
  stroke-opacity: .6;
  paint-order: stroke;
}
.label .bold { font-weight: 500; font-size: 32px; fill: #3c4341; }
.label .city { font-weight: 500; font-size: 38px; fill: #333937; }
.label .country { font-weight: 700; font-size: 50px; fill: #2d3331; }
.label .reserve { fill: #4f917b; stroke: none; font-size: 33px; }
```
